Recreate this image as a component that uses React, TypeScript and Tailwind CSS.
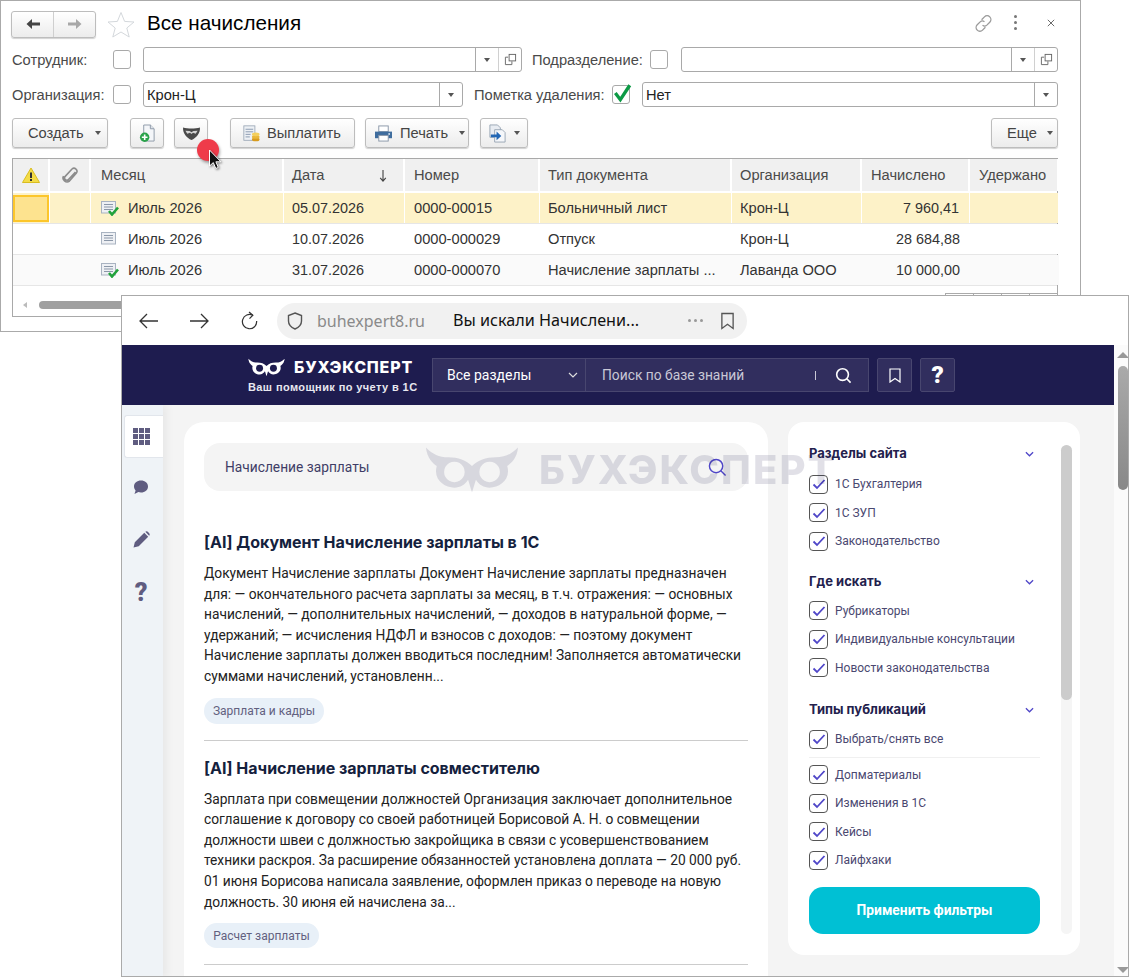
import React from "react";

const A = "font-['Liberation_Sans',Arial,sans-serif]";
const N = "font-['Noto_Sans',sans-serif]";
const R = "font-['Roboto',sans-serif]";
const I = "font-['Inter',sans-serif]";

const Owl = ({ className }: { className?: string }) => (
  <svg viewBox="0 0 96 48" className={className} fill="none">
    <path d="M1 1 C8 8 14 11 24 11 C34 11 42 14 48 20 C54 14 62 11 72 11 C82 11 88 8 95 1 C94 12 88 17 84 20 C88 34 76 42 66 42 C60 42 55 39 52 34 L48 47 L44 34 C41 39 36 42 30 42 C20 42 8 34 12 20 C8 17 2 12 1 1 Z" fill="#fff" />
    <circle cx="30" cy="26" r="9" fill="#1e1c4f" />
    <circle cx="66" cy="26" r="9" fill="#1e1c4f" />
  </svg>
);

const WatermarkOwl = () => (
  <svg viewBox="0 0 96 48" className="w-[94px] h-[48px]" fill="none">
    <path fillRule="evenodd" d="M1 1 C8 8 14 11 24 11 C34 11 42 14 48 20 C54 14 62 11 72 11 C82 11 88 8 95 1 C94 12 88 17 84 20 C88 34 76 42 66 42 C60 42 55 39 52 34 L48 47 L44 34 C41 39 36 42 30 42 C20 42 8 34 12 20 C8 17 2 12 1 1 Z M30 15.5 A10.5 10.5 0 1 0 30.01 15.5 Z M66 15.5 A10.5 10.5 0 1 0 66.01 15.5 Z" fill="#1e1c4f" />
  </svg>
);

const Check1C = () => <div className="w-[18px] h-[19px] border border-[#a9a9a9] rounded-[3px] bg-white shrink-0" />;

const Tri = () => <span className="w-0 h-0 border-x-[3.5px] border-x-transparent border-t-[4px] border-t-[#555] inline-block" />;

const CopyIcon = () => (
  <svg viewBox="0 0 14 14" className="w-[13px] h-[13px]" fill="none" stroke="#666" strokeWidth="1">
    <path d="M4.5 4.5H1.5V12.5H8.5V9" />
    <rect x="5.5" y="1.5" width="7" height="7" fill="#fff" />
  </svg>
);

const Combo = ({ w, value, copy }: { w: string; value?: string; copy?: boolean }) => (
  <div className={`${w} h-[25px] border border-[#a9a9a9] rounded-[3px] bg-white flex items-center shrink-0`}>
    <div className="flex-1 pl-[3px] pt-[1px] text-[14.67px] text-[#222]">{value}</div>
    <div className="w-[23px] h-full border-l border-[#a9a9a9] flex items-center justify-center"><Tri /></div>
    {copy && <div className="w-[23px] h-full border-l border-[#d0d0d0] flex items-center justify-center"><CopyIcon /></div>}
  </div>
);

const Btn = ({ w, children, ml, inner = "justify-center gap-[7px]" }: { w: string; children: React.ReactNode; ml?: string; inner?: string }) => (
  <div className={`${w} ${ml ?? ""} ${inner} h-[30px] border border-[#bdbdbd] rounded-[3px] bg-gradient-to-b from-white to-[#ececec] flex items-center text-[14.67px] text-[#444] shrink-0 shadow-[0_1px_1px_rgba(0,0,0,0.18)]`}>
    {children}
  </div>
);

const DocPlus = () => (
  <svg viewBox="0 0 18 20" className="w-[17px] h-[19px]">
    <path d="M5 1H12L16 5V18H5Z" fill="#f4f6f9" stroke="#8d99a8" />
    <path d="M12 1V5H16" fill="#dfe4ea" stroke="#8d99a8" />
    <circle cx="6" cy="14" r="5" fill="#2aa24a" />
    <path d="M6 11V17M3 14H9" stroke="#fff" strokeWidth="1.7" />
  </svg>
);
const Mask = () => (
  <svg viewBox="0 0 20 16" className="w-[19px] h-[15px]">
    <path d="M1 1.5 C6 3 14 3 19 1.5 C19.5 8 15 12.5 10 15 C5 12.5 0.5 8 1 1.5 Z" fill="#4a4a4a" />
    <path d="M3.5 5 L8 5.2 L10 6.6 L12 5.2 L16.5 5 L14.5 8.2 L11.6 7.2 L10 8.6 L8.4 7.2 L5.5 8.2 Z" fill="#d4d4d4" />
  </svg>
);
const DocCoins = () => (
  <svg viewBox="0 0 22 20" className="w-[19px] h-[17px]">
    <rect x="2" y="1" width="13" height="17" fill="#eef1f5" stroke="#9aa6b5" />
    <path d="M4 5H13M4 8H13M4 11H10M4 14H9" stroke="#7c8ea6" />
    <ellipse cx="16" cy="17" rx="4.5" ry="2.2" fill="#d89b1d" />
    <ellipse cx="16" cy="14" rx="4.5" ry="2.2" fill="#e9b73a" />
    <ellipse cx="16" cy="11" rx="4.5" ry="2.2" fill="#f4cf5d" />
  </svg>
);
const Printer = () => (
  <svg viewBox="0 0 20 18" className="w-[19px] h-[17px]">
    <rect x="5" y="1" width="10" height="6" fill="#fff" stroke="#8a97a8" />
    <path d="M1 7H19V14H1Z" fill="#3f6d9e" />
    <rect x="5" y="11" width="10" height="6" fill="#fff" stroke="#8a97a8" />
    <circle cx="16" cy="9.5" r="1" fill="#cfe0f0" />
  </svg>
);
const DocArrow = () => (
  <svg viewBox="0 0 20 20" className="w-[19px] h-[19px]">
    <path d="M2 1H10L13 4V14H2Z" fill="#e8ecf2" stroke="#9aa6b5" />
    <path d="M7 6H15L18 9V19H7Z" fill="#f5f7fa" stroke="#9aa6b5" />
    <path d="M3 11H9V8L14 12.5L9 17V14H3Z" fill="#2367b5" />
  </svg>
);
const RowDoc = ({ ok }: { ok?: boolean }) => (
  <svg viewBox="0 0 18 16" className="w-[18px] h-[16px]">
    <rect x="0.5" y="1.5" width="14" height="11.5" fill="#eef0f4" stroke="#a9b3c1" />
    <path d="M3 4.5H12M3 7H12M3 9.5H12" stroke="#8b97a8" />
    {ok && <path d="M8 11 L11 14.5 L17 7.5" fill="none" stroke="#22a33b" strokeWidth="2.6" />}
  </svg>
);

const cols = "grid grid-cols-[37px_41px_193px_121px_135px_192px_130px_108px_89px]";

const Head = ({ children, cls = "" }: { children?: React.ReactNode; cls?: string }) => (
  <div className={`bg-[#f0f0f0] border-r-2 border-white flex items-center pl-[9px] text-[14.67px] text-[#4a4a4a] ${cls}`}>{children}</div>
);

const Row = ({ month, date, num, type, org, sum, ok, sel, alt }: { month: string; date: string; num: string; type: string; org: string; sum: string; ok?: boolean; sel?: boolean; alt?: boolean }) => {
  const bg = sel ? "bg-[#fdf2c8]" : alt ? "bg-[#fafafa]" : "bg-white";
  const sep = sel ? "border-r border-white" : "";
  const c = `${bg} ${sep} flex items-center whitespace-nowrap overflow-hidden`;
  return (
    <div className={`${cols} h-[31px] border-b border-[#e6e6e6] text-[14.67px] text-[#333]`}>
      <div className={`${bg} ${sep} flex items-center`}>
        {sel && <div className="w-[37px] h-[27px] bg-[#fde38f] border-2 border-[#fcc62b]" />}
      </div>
      <div className={c} />
      <div className={`${c} pl-[10px] gap-[9px]`}><RowDoc ok={ok} />{month}</div>
      <div className={`${c} pl-[8px] pt-[1px] text-[14.4px]`}>{date}</div>
      <div className={`${c} pl-[9px]`}>{num}</div>
      <div className={`${c} pl-[8px]`}>{type}</div>
      <div className={`${c} pl-[8px]`}>{org}</div>
      <div className={`${c} justify-end pr-[10px] pt-[1px] text-[14.4px]`}>{sum}</div>
      <div className={c} />
    </div>
  );
};

const OneC = () => (
  <div className={`absolute left-0 top-0 w-[1081px] h-[332px] border border-[#aaaaaa] bg-white ${A} px-[11px]`}>
    <div className="h-[46px] flex items-center">
      <div className="w-[85px] h-[27px] border border-[#bdbdbd] rounded-[3px] bg-gradient-to-b from-white to-[#ececec] flex shadow-[0_1px_1px_rgba(0,0,0,0.18)] -ml-[1px]">
        <div className="w-[42px] flex items-center justify-center border-r border-[#cfcfcf]">
          <svg viewBox="0 0 16 12" className="w-[16px] h-[12px]"><path d="M7 1 L1.5 6 L7 11 V7.5 H15 V4.5 H7 Z" fill="#444" /></svg>
        </div>
        <div className="flex-1 flex items-center justify-center">
          <svg viewBox="0 0 16 12" className="w-[16px] h-[12px]"><path d="M9 1 L14.5 6 L9 11 V7.5 H1 V4.5 H9 Z" fill="#a8a8a8" /></svg>
        </div>
      </div>
      <svg viewBox="0 0 28 27" className="w-[28px] h-[27px] ml-[11px]"><path d="M14 1.5 L17.6 10.4 L27 11 L19.8 17 L22.2 26 L14 21 L5.8 26 L8.2 17 L1 11 L10.4 10.4 Z" fill="#fff" stroke="#d4d8dc" /></svg>
      <div className="ml-[12px] mb-[3px] text-[20.67px] text-black">Все начисления</div>
      <div className="flex-1" />
      <svg viewBox="0 0 20 20" className="w-[19px] h-[19px] mb-[2px]" fill="none" stroke="#9a9a9a" strokeWidth="1.4"><path d="M8 6 L11 3 A3.4 3.4 0 0 1 16.6 8.6 L13.5 11.7 A3.4 3.4 0 0 1 9 11.8" /><path d="M12 14 L9 17 A3.4 3.4 0 0 1 3.4 11.4 L6.5 8.3 A3.4 3.4 0 0 1 11 8.2" /></svg>
      <div className="ml-[21px] mb-[3px] flex flex-col gap-[3px]">
        <span className="w-[3px] h-[3px] rounded-full bg-[#777]" /><span className="w-[3px] h-[3px] rounded-full bg-[#777]" /><span className="w-[3px] h-[3px] rounded-full bg-[#777]" />
      </div>
      <svg viewBox="0 0 10 10" className="w-[8px] h-[8px] ml-[30px] mb-[2px] mr-[14px]" stroke="#555" strokeWidth="1.1"><path d="M1 1L9 9M9 1L1 9" /></svg>
    </div>
    <div className="h-[25px] flex items-center text-[14.67px] text-[#4a4a4a]">
      <div className="w-[101px] pt-[1px]">Сотрудник:</div>
      <Check1C />
      <div className="w-[12px]" />
      <Combo w="w-[379px]" copy />
      <div className="ml-[10px] w-[118px] pt-[1px]">Подразделение:</div>
      <Check1C />
      <div className="w-[13px]" />
      <Combo w="w-[377px]" copy />
    </div>
    <div className="h-[25px] mt-[10px] flex items-center text-[14.67px] text-[#4a4a4a]">
      <div className="w-[101px] pt-[1px]">Организация:</div>
      <Check1C />
      <div className="w-[12px]" />
      <Combo w="w-[320px]" value="Крон-Ц" />
      <div className="ml-[11px] w-[138px] pt-[1px] whitespace-nowrap">Пометка удаления:</div>
      <div className="w-[18px] h-[19px] border border-[#a9a9a9] rounded-[3px] bg-white shrink-0 relative">
        <svg viewBox="0 0 18 18" className="absolute -left-[1px] -top-[3px] w-[20px] h-[20px]"><path d="M3 9 L7.5 15 L16 2" fill="none" stroke="#0c9a45" strokeWidth="3" /></svg>
      </div>
      <div className="w-[12px]" />
      <Combo w="w-[416px]" value="Нет" />
    </div>
    <div className="h-[30px] mt-[11px] flex items-center">
      <Btn w="w-[96px]" inner="pl-[15px] gap-[11px]">Создать <Tri /></Btn>
      <Btn w="w-[34px]" ml="ml-[22px]"><DocPlus /></Btn>
      <Btn w="w-[34px]" ml="ml-[10px]"><Mask /></Btn>
      <Btn w="w-[125px]" ml="ml-[22px]" inner="pl-[11px] gap-[6px]"><DocCoins /> Выплатить</Btn>
      <Btn w="w-[104px]" ml="ml-[10px]" inner="pl-[8px] gap-[7px]"><Printer /> Печать <span className="ml-[4px] flex"><Tri /></span></Btn>
      <Btn w="w-[48px]" ml="ml-[11px]"><DocArrow /><Tri /></Btn>
      <div className="flex-1" />
      <Btn w="w-[67px]" ml="mr-[11px]" inner="pl-[15px] gap-[10px]">Еще <Tri /></Btn>
    </div>
    <div className="w-[1046px] mt-[10px] h-[159px] border-t border-x border-b border-[#a9a9a9] -mr-[1px]">
      <div className={`${cols} h-[34px] border-b-2 border-white`}>
        <Head cls="justify-center !pl-0">
          <svg viewBox="0 0 18 16" className="w-[18px] h-[16px]"><path d="M9 1 L17.5 15.5 H0.5 Z" fill="#f4dc48" stroke="#d9bd20" /><path d="M9 5.5V11M9 12V14" stroke="#333" strokeWidth="2" /></svg>
        </Head>
        <Head cls="justify-center !pl-0">
          <svg viewBox="0 0 16 18" className="w-[16px] h-[18px]" fill="none" stroke="#8c8c8c" strokeWidth="1.6"><path d="M13.5 6 L6.5 13.5 A2.2 2.2 0 0 1 3.2 10.4 L10 3 A3 3 0 0 1 14.4 7 L7.5 15 A4 4 0 0 1 1.5 10" /></svg>
        </Head>
        <Head cls="!pl-[10px]">Месяц</Head>
        <Head cls="justify-between pr-[15px] !pl-[8px]">Дата
          <svg viewBox="0 0 10 14" className="w-[10px] h-[13px]" fill="none" stroke="#444" strokeWidth="1.2"><path d="M5 1V13M2 9.5L5 13L8 9.5" /></svg>
        </Head>
        <Head>Номер</Head>
        <Head cls="!pl-[8px]">Тип документа</Head>
        <Head cls="!pl-[8px]">Организация</Head>
        <Head>Начислено</Head>
        <Head cls="border-r-0">Удержано</Head>
      </div>
      <Row sel ok month="Июль 2026" date="05.07.2026" num="0000-00015" type="Больничный лист" org="Крон-Ц" sum="7 960,41" />
      <Row month="Июль 2026" date="10.07.2026" num="0000-000029" type="Отпуск" org="Крон-Ц" sum="28 684,88" />
      <Row alt ok month="Июль 2026" date="31.07.2026" num="0000-000070" type="Начисление зарплаты ..." org="Лаванда ООО" sum="10 000,00" />
      <div className="h-[30px] flex items-start pl-[10px]">
        <span className="mt-[16px] w-0 h-0 border-y-[3px] border-y-transparent border-r-[4px] border-r-[#bbb]" />
        <div className="mt-[15px] ml-[12px] w-[900px] h-[8px] rounded-full bg-[#a0a0a0]" />
        <div className="flex-1" />
        <div className="mt-[7px] flex">
          <span className="w-[28px] h-[20px] border-t border-l border-[#aaaaaa]" />
          <span className="w-[28px] h-[20px] border-t border-l border-[#aaaaaa]" />
          <span className="w-[28px] h-[20px] border-t border-l border-[#aaaaaa]" />
          <span className="w-[28px] h-[20px] border-t border-l border-[#aaaaaa]" />
        </div>
      </div>
    </div>
  </div>
);

const filterGroups: { title: string; items: string[]; all?: boolean; mb: string; hmb: string }[] = [
  { title: "Разделы сайта", mb: "mb-[18px]", hmb: "mb-[8px]", items: ["1С Бухгалтерия", "1С ЗУП", "Законодательство"] },
  { title: "Где искать", mb: "mb-[20px]", hmb: "mb-[7px]", items: ["Рубрикаторы", "Индивидуальные консультации", "Новости законодательства"] },
  { title: "Типы публикаций", mb: "mb-[12px]", hmb: "mb-[7px]", all: true, items: ["Допматериалы", "Изменения в 1С", "Кейсы", "Лайфхаки"] },
];

const BlueCheck = ({ label }: { label: string }) => (
  <div className="flex items-center gap-[7px] h-[28.5px]">
    <div className="w-[19px] h-[19px] border border-[#555] rounded-[4px] bg-white flex items-center justify-center shrink-0">
      <svg viewBox="0 0 14 12" className="w-[14px] h-[12px]"><path d="M1.5 6.5 L5 10 L12.5 2" fill="none" stroke="#4f46c8" strokeWidth="1.8" /></svg>
    </div>
    <span className={`${R} text-[12px] text-[#4a4870]`}>{label}</span>
  </div>
);

const Chevron = () => (
  <svg viewBox="0 0 10 6" className="w-[9px] h-[6px]" fill="none" stroke="#4f46c8" strokeWidth="1.4"><path d="M1 1L5 5L9 1" /></svg>
);

const Result = ({ title, lines, tag, tagW, tagH }: { title: string; lines: string[]; tag: string; tagW: string; tagH: string }) => (
  <div className="border-b border-[#cccccc]">
    <div className={`${I} font-bold text-[16px] leading-[24px] text-[#14213d]`}>{title}</div>
    <div className={`${R} mt-[9px] text-[13.75px] leading-[20.6px] text-[#222]`}>
      {lines.map((l) => <div key={l} className="whitespace-nowrap">{l}</div>)}
    </div>
    <div className={`${tagW} ${tagH} mt-[11px] mb-[16px] rounded-full bg-[#e8f0f8] flex items-center justify-center ${R} text-[12px] text-[#62607f]`}>{tag}</div>
  </div>
);

const Browser = () => (
  <div className={`absolute left-[121px] top-[295px] w-[1008px] h-[682px] border border-[#aaaaaa] bg-white overflow-hidden ${R}`}>
    <div className="h-[49px] flex items-center relative">
      <svg viewBox="0 0 20 16" className="w-[20px] h-[16px] ml-[17px]" fill="none" stroke="#333" strokeWidth="1.3"><path d="M19 8H1M8 1L1 8L8 15" /></svg>
      <svg viewBox="0 0 20 16" className="w-[20px] h-[16px] ml-[30px]" fill="none" stroke="#333" strokeWidth="1.3"><path d="M1 8H19M12 1L19 8L12 15" /></svg>
      <svg viewBox="0 0 20 20" className="w-[19px] h-[20px] ml-[31px]" fill="none" stroke="#333" strokeWidth="1.3"><path d="M13.5 4 A7.5 7.5 0 1 0 17.5 10" /><path d="M9.5 0.5L13.5 4L10 7.5" /></svg>
      <div className="ml-[18px] w-[470px] h-[36px] rounded-full bg-[#f1f1f1] flex items-center">
        <svg viewBox="0 0 16 18" className="w-[16px] h-[18px] ml-[10px]" fill="none" stroke="#555" strokeWidth="1.4"><path d="M8 1L14.5 3.5V9C14.5 13 11 15.7 8 17C5 15.7 1.5 13 1.5 9V3.5Z" /></svg>
        <span className={`ml-[14px] w-[136px] text-[16px] text-[#8a8a8a] whitespace-nowrap ${N}`}>buhexpert8.ru</span>
        <span className={`text-[16.2px] text-[#111] w-[235px] whitespace-nowrap ${N}`}>Вы искали Начислени...</span>
        <div className="flex gap-[3px]">
          <span className="w-[3px] h-[3px] rounded-full bg-[#999]" /><span className="w-[3px] h-[3px] rounded-full bg-[#999]" /><span className="w-[3px] h-[3px] rounded-full bg-[#999]" />
        </div>
        <svg viewBox="0 0 16 18" className="w-[15px] h-[18px] ml-[17px]" fill="none" stroke="#555" strokeWidth="1.4"><path d="M2 1H14V17L8 12.5L2 17Z" /></svg>
      </div>
    </div>
    <div className="flex h-[632px]">
      <div className="w-[992px] flex flex-col shrink-0">
        <div className="h-[60px] bg-[#1e1c4f] flex items-center pl-[126px]">
          <div className="w-[171px] mt-[1px]">
            <div className="flex items-center">
              <Owl className="w-[37px] h-[19px]" />
              <span className={`${I} ml-[9px] text-[16px] leading-[20px] font-extrabold text-white tracking-[0.8px] whitespace-nowrap`}>БУХЭКСПЕРТ</span>
            </div>
            <div className={`${A} text-[11px] leading-[14px] mt-[3px] font-bold text-[#e8e8f0] whitespace-nowrap tracking-[0.4px]`}>Ваш помощник по учету в 1С</div>
          </div>
          <div className="ml-[13px] w-[154px] h-[34px] bg-[#312e5e] border border-[#48466f] flex items-center justify-between pl-[14px] pr-[7px] text-[14px] text-white">
            Все разделы
            <svg viewBox="0 0 10 6" className="w-[10px] h-[6px]" fill="none" stroke="#ddd" strokeWidth="1.2"><path d="M1 1L5 5L9 1" /></svg>
          </div>
          <div className="w-[283px] h-[34px] bg-[#312e5e] border-y border-r border-[#48466f] flex items-center pl-[16px] text-[13.8px] text-[#c9c8d6]">
            <span className="w-[213px]">Поиск по базе знаний</span>
            <span className="w-px h-[9px] bg-[#c9c8d6]" />
            <svg viewBox="0 0 18 18" className="w-[17px] h-[17px] ml-[19px]" fill="none" stroke="#fff" strokeWidth="1.7"><circle cx="8" cy="8" r="6.2" /><path d="M12.5 12.5L16.5 16.5" /></svg>
          </div>
          <div className="ml-[8px] w-[35px] h-[34px] bg-[#312e5e] border border-[#48466f] rounded-[2px] flex items-center justify-center">
            <svg viewBox="0 0 12 15" className="w-[12px] h-[15px]" fill="none" stroke="#fff" strokeWidth="1.2"><path d="M1 1H11V14L6 10.5L1 14Z" /></svg>
          </div>
          <div className="ml-[8px] w-[35px] h-[34px] bg-[#312e5e] border border-[#48466f] rounded-[2px] flex items-center justify-center text-white text-[24px] font-black">?</div>
        </div>
        <div className="flex-1 bg-[#f4f4f4] flex overflow-hidden">
          <div className="w-[41px] bg-[#eff3f7] shrink-0 pt-[10px] flex flex-col items-center shadow-[4px_0_8px_rgba(0,0,0,0.05)]">
            <div className="ml-[2px] w-[39px] h-[43px] bg-white rounded-l-[3px] border-y border-l border-[#e2e6ec] flex items-center justify-center pr-[5px]">
              <div className="grid grid-cols-3 gap-[1px]">
                {Array.from({ length: 9 }).map((_, i) => <span key={i} className="w-[5px] h-[5px] bg-[#5f5c80]" />)}
              </div>
            </div>
            <svg viewBox="0 0 16 16" className="w-[16px] h-[16px] mt-[21px] mr-[3px]"><path d="M8 1.5 C12 1.5 15 4 15 7.5 C15 11 12 13.5 8 13.5 C7 13.5 6.2 13.4 5.4 13.1 L1.5 15 L2.6 11.4 C1.5 10.3 1 9 1 7.5 C1 4 4 1.5 8 1.5 Z" fill="#5f5c80" /></svg>
            <svg viewBox="0 0 16 16" className="w-[17px] h-[17px] mt-[36px] mr-[3px]"><path d="M0.5 15.5 L1.7 10.6 L10.6 1.7 L14.3 5.4 L5.4 14.3 Z M11.6 0.8 C12.3 0.1 13.3 0.1 14 0.8 L15.2 2 C15.9 2.7 15.9 3.7 15.2 4.4 Z" fill="#5f5c80" /></svg>
            <span className="mt-[31px] mr-[3px] text-[25px] leading-[28px] font-black text-[#5f5c80]">?</span>
          </div>
          <div className="flex-1 flex pl-[21px] pt-[17px] gap-[20px] items-start">
            <div className="w-[584px] h-[600px] bg-white rounded-t-[20px] px-[20px] pt-[21px] shrink-0">
              <div className="h-[48px] rounded-[16px] bg-[#f4f4f4] flex items-center justify-between pl-[21px] pr-[21px]">
                <span className="text-[13.75px] text-[#3f3d66]">Начисление зарплаты</span>
                <svg viewBox="0 0 20 20" className="w-[19px] h-[19px]" fill="none" stroke="#4f46c8" strokeWidth="1.5"><circle cx="8.5" cy="8.5" r="7" /><path d="M13.5 13.5L18.5 18.5" /></svg>
              </div>
              <div className="mt-[39px]">
                <Result tagW="w-[120px]" tagH="h-[26px]" tag="Зарплата и кадры" title="[AI] Документ Начисление зарплаты в 1С" lines={[
                  "Документ Начисление зарплаты Документ Начисление зарплаты предназначен",
                  "для: — окончательного расчета зарплаты за месяц, в т.ч. отражения: — основных",
                  "начислений, — дополнительных начислений, — доходов в натуральной форме, —",
                  "удержаний; — исчисления НДФЛ и взносов с доходов: — поэтому документ",
                  "Начисление зарплаты должен вводиться последним! Заполняется автоматически",
                  "суммами начислений, установленн...",
                ]} />
                <div className="h-[15px]" />
                <Result tagW="w-[115px]" tagH="h-[25px]" tag="Расчет зарплаты" title="[AI] Начисление зарплаты совместителю" lines={[
                  "Зарплата при совмещении должностей Организация заключает дополнительное",
                  "соглашение к договору со своей работницей Борисовой А. Н. о совмещении",
                  "должности швеи с должностью закройщика в связи с усовершенствованием",
                  "техники раскроя. За расширение обязанностей установлена доплата — 20 000 руб.",
                  "01 июня Борисова написала заявление, оформлен приказ о переводе на новую",
                  "должность. 30 июня ей начислена за...",
                ]} />
              </div>
            </div>
            <div className="w-[292px] h-[533px] bg-white rounded-[16px] shrink-0 flex pl-[21px] pt-[24px] relative">
              <div className="w-[231px]">
                {filterGroups.map((g) => (
                  <div key={g.title} className={g.mb}>
                    <div className={`h-[16px] flex items-center justify-between pr-[6px] ${g.hmb}`}>
                      <span className={`${I} text-[13px] font-bold text-[#23214d]`}>{g.title}</span>
                      <Chevron />
                    </div>
                    {g.all && (
                      <>
                        <BlueCheck label="Выбрать/снять все" />
                        <div className="h-px bg-[#f0f0f0] my-[3px]" />
                      </>
                    )}
                    {g.items.map((i) => <BlueCheck key={i} label={i} />)}
                  </div>
                ))}
                <div className={`h-[47px] rounded-[14px] bg-[#00c0d4] flex items-center justify-center ${R} text-[13.8px] font-bold text-white`}>Применить фильтры</div>
              </div>
              <div className="absolute left-[273px] top-[23px] w-[11px] h-[489px] bg-[#f5f5f5] rounded-full">
                <div className="h-[255px] bg-[#cccccc] rounded-full" />
              </div>
            </div>
          </div>
        </div>
      </div>
      <div className="flex-1 bg-[#fbfbfb] flex flex-col items-center pt-[7px] pb-[4px] pl-[3px]">
        <span className="w-0 h-0 border-x-[6px] border-x-transparent border-b-[6px] border-b-[#999]" />
        <div className="mt-[8px] w-[10px] h-[124px] rounded-full bg-gradient-to-b from-[#aaa] to-[#888]" />
        <div className="flex-1" />
        <span className="w-0 h-0 border-x-[6px] border-x-transparent border-t-[6px] border-t-[#999]" />
      </div>
    </div>
  </div>
);

export default function App() {
  return (
    <div className="relative w-[1129px] h-[977px] bg-white overflow-hidden">
      <OneC />
      <div className="absolute left-[197px] top-[139px] w-[22px] h-[22px] rounded-full bg-[#ef3b4a] shadow-[1px_2px_3px_rgba(0,0,0,0.35)]" />
      <svg viewBox="0 0 14 22" className="absolute left-[208px] top-[149px] w-[15px] h-[22px] drop-shadow-[1px_1px_1px_rgba(0,0,0,0.5)]">
        <path d="M1 1 V17 L4.8 13.6 L7.3 19.5 L9.8 18.4 L7.4 12.8 H12.4 Z" fill="#111" stroke="#fff" strokeWidth="1" />
      </svg>
      <Browser />
      <div className="absolute left-[425px] top-[446px] flex items-center opacity-[0.13] pointer-events-none">
        <WatermarkOwl />
        <span className={`${I} ml-[20px] text-[40px] leading-[48px] font-extrabold text-[#1e1c4f] tracking-[2px] whitespace-nowrap`}>БУХЭКСПЕРТ</span>
      </div>
    </div>
  );
}
